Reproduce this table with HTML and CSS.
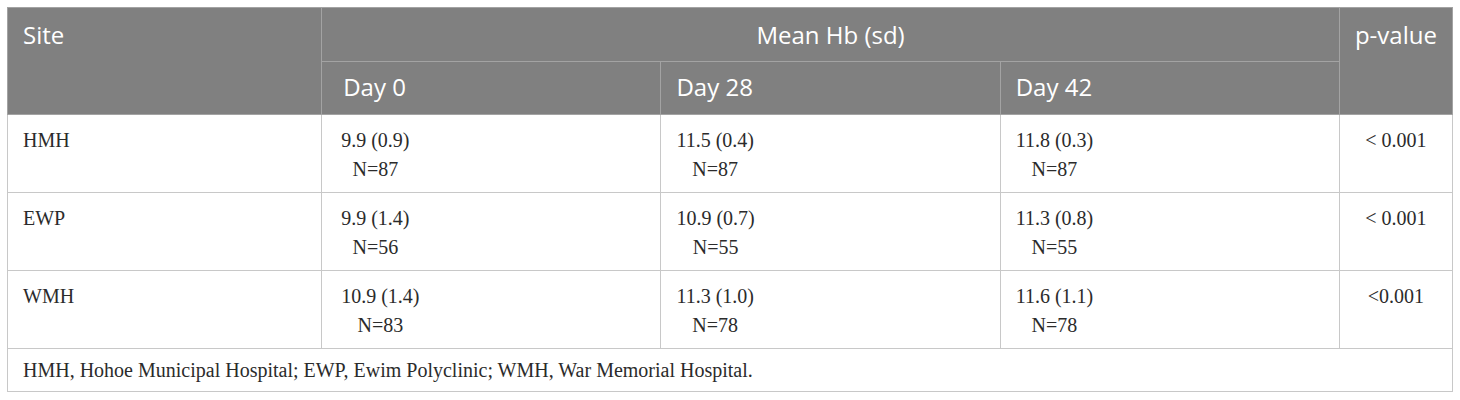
FILE: index.html
```html
<!DOCTYPE html>
<html lang="en">
<head>
<meta charset="utf-8">
<title>Mean Hb by site</title>
<link rel="stylesheet" href="styles.css">
</head>
<body>
<div class="wrap">
<table class="hb-table">
  <colgroup>
    <col class="c-site">
    <col class="c-day">
    <col class="c-day">
    <col class="c-day">
    <col class="c-p">
  </colgroup>
  <thead>
    <tr class="head-1">
      <th rowspan="2" class="th-top">Site</th>
      <th colspan="3" class="th-center">Mean Hb (sd)</th>
      <th rowspan="2" class="th-top">p-value</th>
    </tr>
    <tr class="head-2">
      <th class="first-day">Day 0</th>
      <th>Day 28</th>
      <th>Day 42</th>
    </tr>
  </thead>
  <tbody>
    <tr>
      <td class="site">HMH</td>
      <td class="val first-day"><span class="stack">9.9 (0.9)<br>N=87</span></td>
      <td class="val"><span class="stack">11.5 (0.4)<br>N=87</span></td>
      <td class="val"><span class="stack">11.8 (0.3)<br>N=87</span></td>
      <td class="pval">&lt; 0.001</td>
    </tr>
    <tr>
      <td class="site">EWP</td>
      <td class="val first-day"><span class="stack">9.9 (1.4)<br>N=56</span></td>
      <td class="val"><span class="stack">10.9 (0.7)<br>N=55</span></td>
      <td class="val"><span class="stack">11.3 (0.8)<br>N=55</span></td>
      <td class="pval">&lt; 0.001</td>
    </tr>
    <tr>
      <td class="site">WMH</td>
      <td class="val first-day"><span class="stack">10.9 (1.4)<br>N=83</span></td>
      <td class="val"><span class="stack">11.3 (1.0)<br>N=78</span></td>
      <td class="val"><span class="stack">11.6 (1.1)<br>N=78</span></td>
      <td class="pval">&lt;0.001</td>
    </tr>
  </tbody>
  <tfoot>
    <tr>
      <td colspan="5" class="foot">HMH, Hohoe Municipal Hospital; EWP, Ewim Polyclinic; WMH, War Memorial Hospital.</td>
    </tr>
  </tfoot>
</table>
</div>
</body>
</html>
```

FILE: styles.css
```css
html, body {
  margin: 0;
  padding: 0;
  background: #ffffff;
}

.wrap {
  padding: 7px 0 0 7px;
}

.hb-table {
  border-collapse: collapse;
  table-layout: fixed;
  width: 1446px;
  border: 1px solid #c8c8c8;
}

.c-site { width: 314px; }
.c-day { width: 339px; }
.c-p { width: 113px; }

.hb-table th {
  background: #808080;
  color: #ffffff;
  font-family: "Open Sans", "Noto Sans", sans-serif;
  font-weight: 400;
  font-size: 24px;
  line-height: 32px;
  text-align: left;
  padding: 11px 15px 10px;
  border: 1px solid #a3a3a3;
  vertical-align: top;
}

.hb-table .head-2 th {
  padding: 9px 15px 11px;
}

.hb-table th.th-center {
  text-align: center;
}

.hb-table th.first-day {
  padding-left: 21px;
}

.hb-table td {
  font-family: "Liberation Serif", "Times New Roman", serif;
  font-size: 20px;
  line-height: 29px;
  color: #2b2b2b;
  padding: 11px 15px 8px;
  border: 1px solid #c8c8c8;
  vertical-align: top;
  text-align: left;
}

.hb-table td.val.first-day {
  padding-left: 19px;
}

.stack {
  display: inline-block;
  text-align: center;
}

.hb-table td.pval {
  text-align: center;
  padding-left: 4px;
  padding-right: 4px;
}

.hb-table td.foot {
  padding: 7px 15px 6px;
}
```
